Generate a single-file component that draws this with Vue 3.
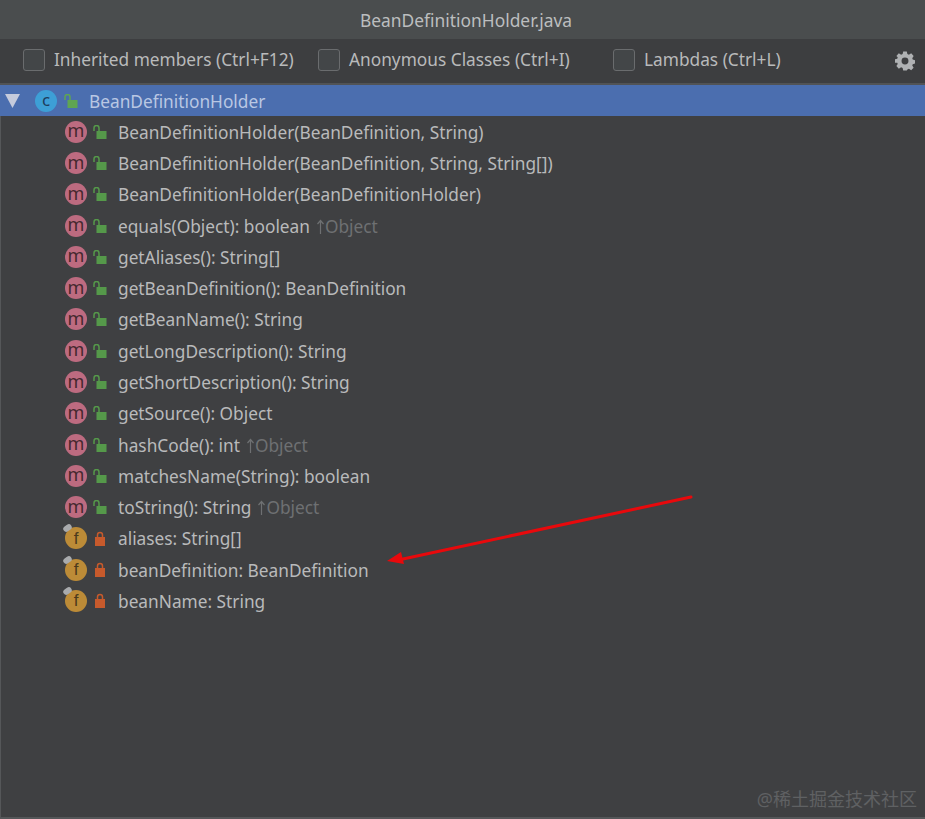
<script setup>
const rows = [
  { name: 'BeanDefinitionHolder(BeanDefinition, String)' },
  { name: 'BeanDefinitionHolder(BeanDefinition, String, String[])' },
  { name: 'BeanDefinitionHolder(BeanDefinitionHolder)' },
  { name: 'equals(Object): boolean', inh: 'Object' },
  { name: 'getAliases(): String[]' },
  { name: 'getBeanDefinition(): BeanDefinition' },
  { name: 'getBeanName(): String' },
  { name: 'getLongDescription(): String' },
  { name: 'getShortDescription(): String' },
  { name: 'getSource(): Object' },
  { name: 'hashCode(): int', inh: 'Object' },
  { name: 'matchesName(String): boolean' },
  { name: 'toString(): String', inh: 'Object' },
  { name: 'aliases: String[]', field: true },
  { name: 'beanDefinition: BeanDefinition', field: true },
  { name: 'beanName: String', field: true },
]
const filters = ['Inherited members (Ctrl+F12)', 'Anonymous Classes (Ctrl+I)', 'Lambdas (Ctrl+L)']
</script>

<template>
  <div class="win">
    <header class="title">BeanDefinitionHolder.java</header>
    <div class="toolbar">
      <label v-for="f in filters" :key="f" class="filter">
        <span class="box"></span>
        <span>{{ f }}</span>
      </label>
      <svg class="gear" width="20" height="20" viewBox="0 0 22 22">
        <path fill="#afb1b3" fill-rule="evenodd" d="M9 .5h4l.6 2.800 1.700.8L17.800 2.600l2.700 2.900-1.500 2.400.5 1.400 2.500.8v3.600l-2.500.8-.5 1.500 1.500 2.300-2.700 2.800-2.500-1.500-1.700.8L13 21.500H9l-.6-2.800-1.700-.8-2.500 1.500-2.700-2.800 1.500-2.300-.5-1.500L0 12.800V9.200l2.500-.8.5-1.400L1.500 5.500 4.200 2.600l2.500 1.500 1.700-.8zM11 7.200a3.800 3.800 0 1 0 0 7.600 3.800 3.800 0 0 0 0-7.600z"/>
      </svg>
    </div>
    <div class="tree">
      <div class="row selected">
        <svg class="arrow" width="16" height="14" viewBox="0 0 16 14"><path d="M0 0h15L7.500 14z" fill="#c5cbdc"/></svg>
        <span class="badge cls">c</span>
        <svg class="lock" width="14" height="14" viewBox="0 0 14 14">
          <rect x="3.500" y="6" width="10" height="8" fill="#5fa552"/>
          <path d="M1 6V3a2.500 2.500 0 0 1 5 0v3" fill="none" stroke="#5fa552" stroke-width="1.500"/>
        </svg>
        <span class="label cname">BeanDefinitionHolder</span>
      </div>
      <div v-for="r in rows" :key="r.name" class="row member">
        <span class="badge-wrap">
          <span v-if="r.field" class="badge fld">f</span>
          <span v-else class="badge mth">m</span>
          <span v-if="r.field" class="pin"></span>
        </span>
        <svg v-if="r.field" class="lock priv" width="12" height="15" viewBox="0 0 12 15">
          <rect x="1" y="6" width="10" height="9" fill="#c75a2c"/>
          <path d="M3.500 6.500V4a2.500 2.500 0 0 1 5 0v2.500" fill="none" stroke="#c75a2c" stroke-width="1.500"/>
        </svg>
        <svg v-else class="lock" width="14" height="14" viewBox="0 0 14 14">
          <rect x="3.500" y="6" width="10" height="8" fill="#55994a"/>
          <path d="M1 6V3a2.500 2.500 0 0 1 5 0v3" fill="none" stroke="#55994a" stroke-width="1.500"/>
        </svg>
        <span class="label">{{ r.name }}<span v-if="r.inh" class="inh"><svg class="up" width="9" height="16" viewBox="0 0 9 16"><path d="M4.500 15V2M1.500 5l3-3.500 3 3.500" fill="none" stroke="#6e7072" stroke-width="1.200"/></svg>{{ r.inh }}</span></span>
      </div>
    </div>
    <svg class="pointer" width="320" height="80" viewBox="0 0 320 80">
      <path d="M306 3 L18 65" stroke="#e8090c" stroke-width="3" stroke-linecap="round" fill="none"/>
      <path d="M2 67 L16 58 L19 70z" fill="#e8090c"/>
    </svg>
    <span class="mark">@稀土掘金技术社区</span>
  </div>
</template>

<style>
html, body { margin: 0; background: #3f4042; }
</style>

<style scoped>
.win {
  position: relative;
  width: 925px;
  height: 819px;
  overflow: hidden;
  background: #3f4042;
  font-family: "Noto Sans", "Noto Sans CJK SC", sans-serif;
  font-size: 17.300px;
  color: #b9babb;
  box-shadow: inset 1px 0 0 #555759, inset 0 -2px 0 #555759;
  box-sizing: border-box;
}
.title {
  height: 39px;
  line-height: 40px;
  text-align: center;
  background: #4a4d4e;
  color: #bcbebf;
  font-size: 17.400px;
  padding-left: 7px;
}
.toolbar {
  display: flex;
  align-items: center;
  height: 44px;
  padding: 0 10px 0 23px;
  background: #3d3e40;
  border-bottom: 2px solid #515355;
  line-height: 24px;
}
.filter {
  display: flex;
  align-items: center;
  gap: 9px;
  width: 295px;
  flex: none;
  margin-top: -2px;
}
.filter:nth-child(3) { width: auto; }
.box {
  width: 20px;
  height: 20px;
  border: 1px solid #6a6c6e;
  border-radius: 3px;
  background: #434648;
  flex: none;
}
.gear { margin-left: auto; margin-top: -1px; flex: none; }
.tree { display: flex; flex-direction: column; }
.row {
  display: flex;
  align-items: center;
  height: 31.270px;
  line-height: 26px;
}
.selected {
  background: #4b6eaf;
  position: relative;
}
.arrow { margin-left: 5px; }
.cls { margin-left: 14px; }
.selected .lock { margin-left: 7px; }
.cname { margin-left: 11px; color: #b9c7e3; }
.member { padding-left: 65px; }
.badge-wrap { position: relative; display: flex; }
.badge {
  display: flex;
  align-items: center;
  justify-content: center;
  width: 22px;
  height: 22px;
  border-radius: 50%;
  line-height: 1;
  flex: none;
}
.cls { background: #3d9fd6; color: #1d3d5c; font-size: 17px; padding-bottom: 3px; height: 19px; }
.mth { background: #bd6b80; color: #45282f; font-size: 18px; padding-bottom: 3px; height: 19px; }
.fld { background: #bc8b37; color: #4a3a1c; font-size: 17px; font-family: "Liberation Sans", sans-serif; }
.pin {
  position: absolute;
  left: -2px;
  top: -2px;
  width: 9px;
  height: 6px;
  border-radius: 3px;
  background: #a9abad;
  transform: rotate(-35deg);
}
.member .lock { margin-left: 6px; }
.member .priv { margin-left: 7px; margin-right: 1px; }
.label { white-space: nowrap; padding-top: 2px; }
.member .label { margin-left: 11px; }
.inh { color: #6e7072; margin-left: 6px; }
.up { vertical-align: -2px; }
.pointer {
  position: absolute;
  left: 385px;
  top: 494px;
}
.mark {
  position: absolute;
  right: 8px;
  bottom: 8px;
  font-size: 18px;
  color: #5f6163;
  white-space: nowrap;
}
</style>
